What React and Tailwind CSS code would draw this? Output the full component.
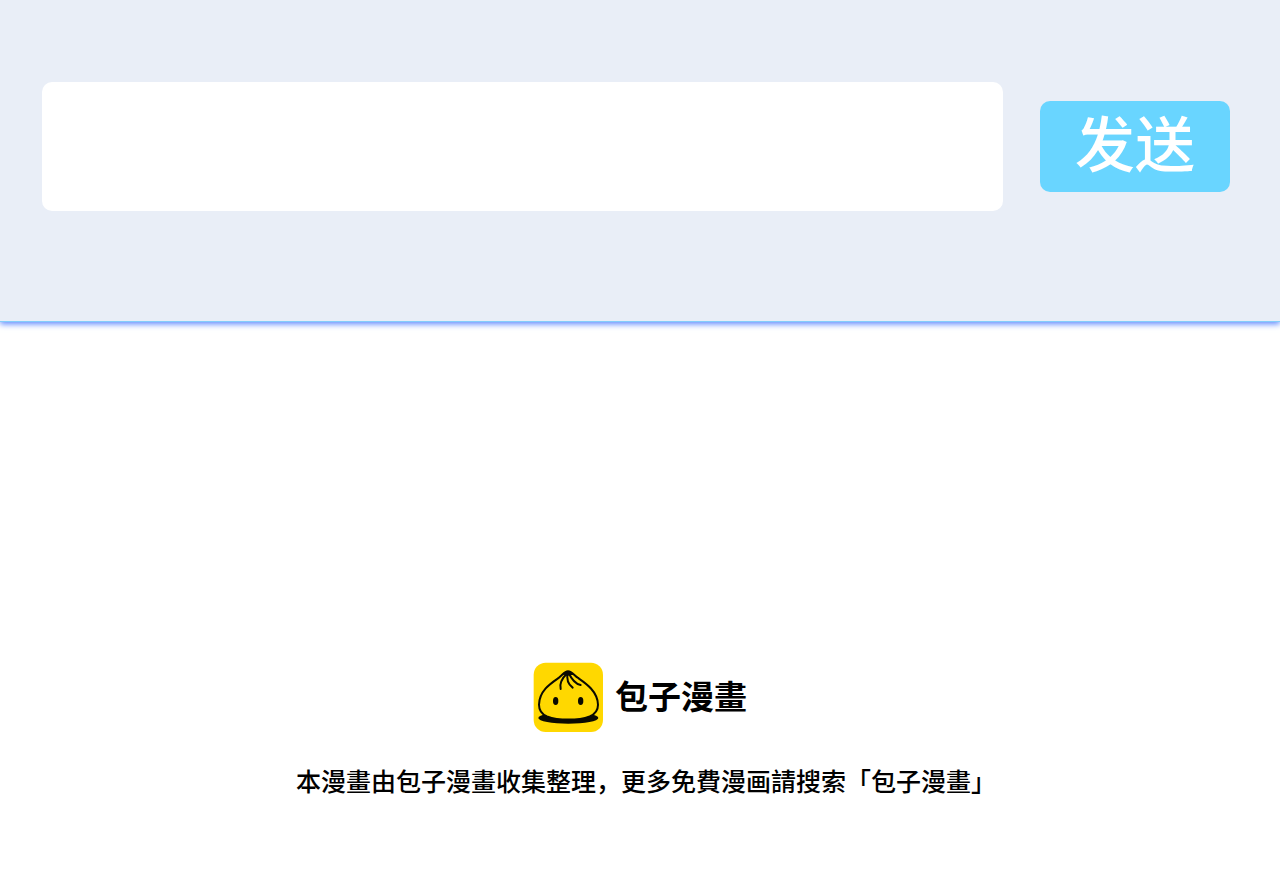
import { useState } from "react";

const BaoziLogo = () => (
  <svg viewBox="0 0 210 210" className="size-[70px]" aria-hidden="true">
    <rect x="2" y="2" width="208" height="208" rx="36" fill="#ffd800" />
    {/* plate */}
    <ellipse cx="106" cy="168" rx="90" ry="17" fill="#0a0a00" />
    {/* bun */}
    <path
      d="M105 28C94 28 90 38 78 47C58 61 19 84 18 128C18 148 28 157 42 163C76 176 136 176 170 163C184 157 195 148 195 128C194 86 154 61 134 47C122 38 116 28 105 28Z"
      fill="#ffd800"
      stroke="#0a0a00"
      strokeWidth="6"
    />
    {/* folds */}
    <path
      d="M83 81C79 66 87 49 103 33M119 77C107 68 100 52 104 33M143 69C127 66 116 52 107 33"
      fill="none"
      stroke="#0a0a00"
      strokeWidth="6"
      strokeLinecap="round"
    />
    <path d="M88 38C94 30 98 27 105 27C112 27 117 31 124 40C116 38 109 38 104 42C99 38 94 38 88 38Z" fill="#0a0a00" />
    <ellipse cx="68" cy="117" rx="8" ry="12" fill="#0a0a00" />
    <ellipse cx="143" cy="117" rx="8" ry="12" fill="#0a0a00" />
  </svg>
);

const SendBar = () => {
  const [text, setText] = useState("");

  const handleSubmit = (e) => {
    e.preventDefault();
    if (!text.trim()) return;
    setText("");
  };

  return (
    <form
      onSubmit={handleSubmit}
      className="flex items-center gap-[37px] border-b border-[#84cdfb] bg-[#e9eef7] pt-[82px] pr-[50px] pb-[110px] pl-[42px] shadow-[0_2px_6px_#5b86ff]"
    >
      <input
        type="text"
        aria-label="发送"
        value={text}
        onChange={(e) => setText(e.target.value)}
        className="h-[129px] min-w-0 flex-1 rounded-[10px] bg-white px-8 text-5xl outline-none"
      />
      <button
        type="submit"
        className="h-[91px] w-[190px] shrink-0 rounded-[10px] bg-[#69d5ff] pb-3 text-[60px] leading-none font-medium text-white"
      >
        发送
      </button>
    </form>
  );
};

const App = () => {
  return (
    <div className="bg-white font-['Noto_Sans_CJK_SC',sans-serif] text-black">
      <SendBar />
      <footer className="flex flex-col items-center px-4 pt-[340px] pb-16">
        <div className="flex items-center gap-3">
          <BaoziLogo />
          <h1 className="pb-1 text-[33px] leading-none font-bold">包子漫畫</h1>
        </div>
        <p className="mt-[30px] pl-3 text-[25px] leading-9 font-medium">
          本漫畫由包子漫畫收集整理，更多免費漫画請搜索「包子漫畫」
        </p>
      </footer>
    </div>
  );
};

export default App;
